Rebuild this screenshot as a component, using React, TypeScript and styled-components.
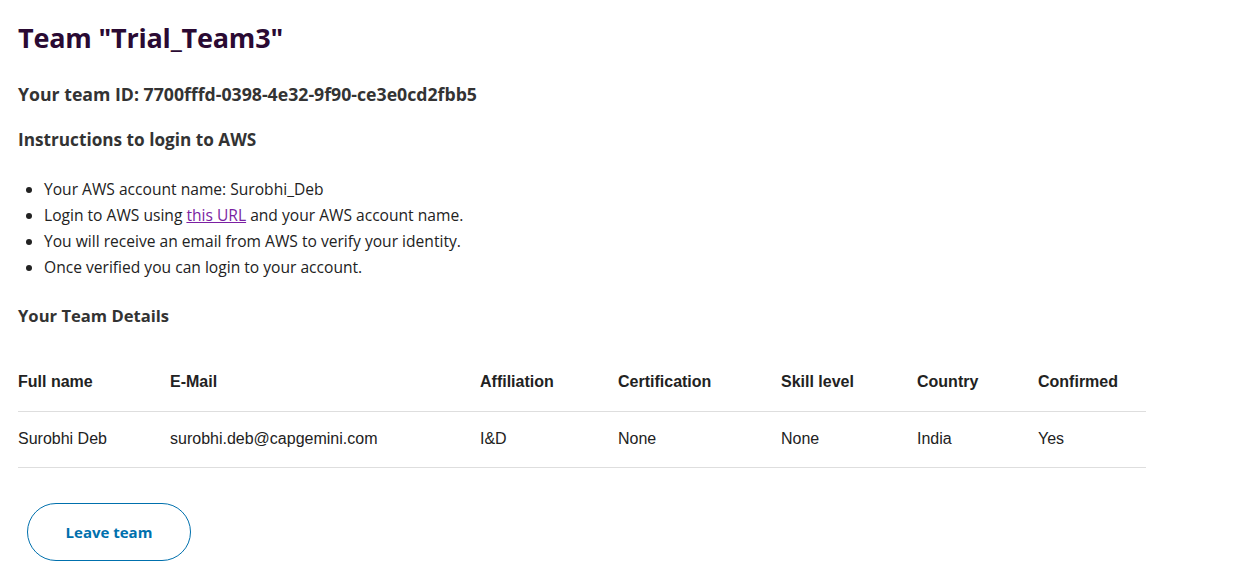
import React from "react";
import styled, { createGlobalStyle } from "styled-components";

const Global = createGlobalStyle`
  html, body { margin: 0; padding: 0; background: #fff; }
  body { font-family: "Open Sans", "Noto Sans", sans-serif; color: #333; }
`;

const Page = styled.main`
  padding: 18px 18px 0 18px;
  display: flex;
  flex-direction: column;
  align-items: flex-start;
`;

const Title = styled.h1`
  margin: 0;
  font-size: 27px;
  line-height: 40px;
  font-weight: 700;
  color: #2a0a33;
  letter-spacing: -0.2px;
`;

const IdLine = styled.h3`
  margin: 24px 0 0 0;
  font-size: 17.7px;
  line-height: 24px;
  font-weight: 700;
  color: #333;
`;

const SectionHeading = styled.h3<{ $top: number; $size: number }>`
  margin: ${(p) => p.$top}px 0 0 0;
  font-size: ${(p) => p.$size}px;
  line-height: 24px;
  font-weight: 700;
  color: #333;
`;

const List = styled.ul`
  margin: 24px 0 0 0;
  padding: 0 0 0 26px;
  font-size: 15.6px;
  line-height: 26px;
  color: #222;
`;

const Link = styled.a`
  color: #7b1fa2;
  text-decoration: underline;
`;

const Table = styled.table`
  margin-top: 25px;
  width: 1128px;
  border-collapse: collapse;
  font-family: "Liberation Sans", Arial, sans-serif;
  font-size: 16px;
  color: #222;
`;

const Th = styled.th<{ $w: number }>`
  width: ${(p) => p.$w}px;
  text-align: left;
  font-weight: 700;
  padding: 0;
  height: 58px;
  vertical-align: middle;
  border-bottom: 1px solid #dedede;
`;

const Td = styled.td`
  text-align: left;
  padding: 0 0 2px 0;
  height: 53px;
  vertical-align: middle;
  border-bottom: 1px solid #dedede;
`;

const Button = styled.button`
  margin: 35px 0 0 9px;
  width: 164px;
  height: 58px;
  border-radius: 29px;
  border: 1px solid #0070ad;
  background: #fff;
  color: #0070ad;
  font-family: "Open Sans", "Noto Sans", sans-serif;
  font-weight: 700;
  font-size: 15px;
  cursor: pointer;
`;

const cols = [
  { label: "Full name", w: 152 },
  { label: "E-Mail", w: 310 },
  { label: "Affiliation", w: 138 },
  { label: "Certification", w: 163 },
  { label: "Skill level", w: 136 },
  { label: "Country", w: 121 },
  { label: "Confirmed", w: 108 },
];

const row = ["Surobhi Deb", "surobhi.deb@capgemini.com", "I&D", "None", "None", "India", "Yes"];

export default function App() {
  return (
    <>
      <Global />
      <Page>
        <Title>Team "Trial_Team3"</Title>
        <IdLine>Your team ID: 7700fffd-0398-4e32-9f90-ce3e0cd2fbb5</IdLine>
        <SectionHeading $top={22} $size={17.2}>Instructions to login to AWS</SectionHeading>
        <List>
          <li>Your AWS account name: Surobhi_Deb</li>
          <li>
            Login to AWS using <Link href="#">this URL</Link> and your AWS account name.
          </li>
          <li>You will receive an email from AWS to verify your identity.</li>
          <li>Once verified you can login to your account.</li>
        </List>
        <SectionHeading $top={24} $size={16.6}>Your Team Details</SectionHeading>
        <Table>
          <thead>
            <tr>
              {cols.map((c) => (
                <Th key={c.label} $w={c.w}>
                  {c.label}
                </Th>
              ))}
            </tr>
          </thead>
          <tbody>
            <tr>
              {row.map((v, i) => (
                <Td key={i}>{v}</Td>
              ))}
            </tr>
          </tbody>
        </Table>
        <Button>Leave team</Button>
      </Page>
    </>
  );
}
